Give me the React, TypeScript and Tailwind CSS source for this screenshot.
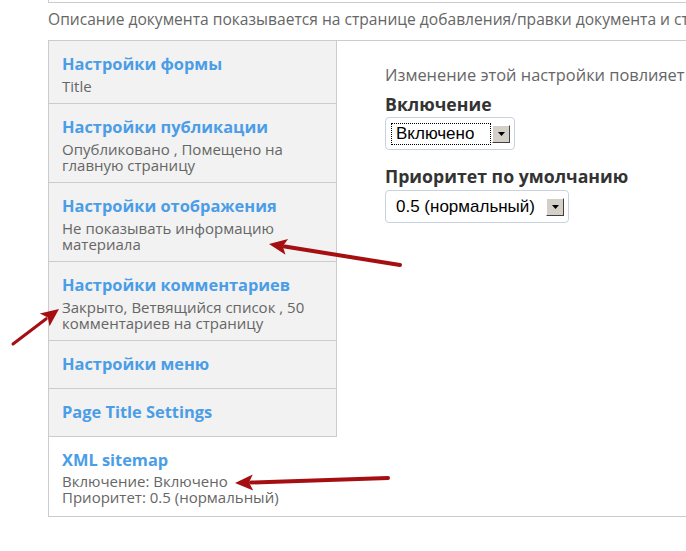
import React from "react";

const tabs = [
  { title: "Настройки формы", summary: ["Title"] },
  { title: "Настройки публикации", summary: ["Опубликовано , Помещено на", "главную страницу"] },
  { title: "Настройки отображения", summary: ["Не показывать информацию", "материала"] },
  { title: "Настройки комментариев", summary: ["Закрыто, Ветвящийся список , 50", "комментариев на страницу"] },
  { title: "Настройки меню", summary: [] },
  { title: "Page Title Settings", summary: [] },
];

function Arrow({ x1, y1, x2, y2, w }: { x1: number; y1: number; x2: number; y2: number; w: number }) {
  const dx = x2 - x1;
  const dy = y2 - y1;
  const len = Math.sqrt(dx * dx + dy * dy);
  const ux = dx / len;
  const uy = dy / len;
  const hl = 18;
  const hw = 8;
  const bx = x2 - ux * hl;
  const by = y2 - uy * hl;
  const px = -uy;
  const py = ux;
  return (
    <g>
      <line x1={x1} y1={y1} x2={bx + ux * 2} y2={by + uy * 2} stroke="#a50f12" strokeWidth={w} strokeLinecap="round" />
      <polygon
        points={`${x2},${y2} ${bx + px * hw},${by + py * hw} ${bx + ux * 4},${by + uy * 4} ${bx - px * hw},${by - py * hw}`}
        fill="#a50f12"
      />
    </g>
  );
}

function Select({ value, textWidth, focused }: { value: string; textWidth: string; focused?: boolean }) {
  return (
    <div className="inline-flex items-center h-[33px] rounded-[4px] border border-[#c9d3de] pl-[5px] pr-[4px] bg-white">
      <div
        className={`h-[22px] flex items-center pl-[4px] text-[17px] text-black ${textWidth} ${focused ? "border border-dotted border-black" : "border border-transparent"}`}
        style={{ fontFamily: '"Liberation Sans", Arial, sans-serif' }}
      >
        {value}
      </div>
      <div className="ml-[1px] w-[18px] h-[18px] bg-[#d4d0c8] border border-t-white border-l-white border-r-[#404040] border-b-[#404040] flex items-center justify-center">
        <svg width="7" height="4" viewBox="0 0 7 4"><polygon points="0,0 7,0 3.5,4" fill="#000" /></svg>
      </div>
    </div>
  );
}

export default function App() {
  return (
    <div className="relative w-[686px] h-[551px] overflow-hidden bg-white" style={{ fontFamily: '"Open Sans", sans-serif' }}>
      <div className="ml-[48px] h-[3px] border-l border-b border-[#cccccc]" />
      <div className="ml-[48px] mt-[5px] text-[15.6px] leading-[22px] text-[#666] whitespace-nowrap">
        Описание документа показывается на странице добавления/правки документа и стиль показа
      </div>
      <div className="ml-[48px] mt-[10px] w-[700px] flex border-t border-b border-l border-[#cccccc]">
        <div className="w-[288px] shrink-0 flex flex-col">
          {tabs.map((t) => (
            <div
              key={t.title}
              className={`bg-[#f2f2f2] border-r border-b border-[#cccccc] pl-[13px] pr-[8px] pt-[12px] ${t.summary.length > 0 ? "pb-[9px]" : "pb-[13px]"}`}
            >
              <div className="text-[16.4px] leading-[22px] font-bold text-[#4a9de6] whitespace-nowrap">{t.title}</div>
              {t.summary.length > 0 && (
                <div className="mt-[3px] text-[15px] leading-[16px] text-[#666]">
                  {t.summary.map((s) => (
                    <div key={s} className="whitespace-nowrap">{s}</div>
                  ))}
                </div>
              )}
            </div>
          ))}
          <div className="bg-white pl-[13px] pr-[8px] pt-[12px] pb-[11px]">
            <div className="text-[16.4px] leading-[22px] font-bold text-[#4a9de6]">XML sitemap</div>
            <div className="mt-[2px] text-[15px] leading-[16px] text-[#666]">
              <div>Включение: Включено</div>
              <div>Приоритет: 0.5 (нормальный)</div>
            </div>
          </div>
          <div className="flex-1 border-r border-[#cccccc]" />
        </div>
        <div className="flex-1 pl-[48px] pt-[23px]">
          <div className="text-[16.4px] leading-[22px] text-[#666] whitespace-nowrap">Изменение этой настройки повлияет на все документы</div>
          <div className="mt-[6px] text-[17.7px] leading-[24px] font-bold text-[#333]">Включение</div>
          <div className="mt-[1px]">
            <Select value="Включено" textWidth="w-[100px]" focused />
          </div>
          <div className="mt-[14px] text-[17.7px] leading-[24px] font-bold text-[#333]">Приоритет по умолчанию</div>
          <div className="mt-[2px]">
            <Select value="0.5 (нормальный)" textWidth="w-[154px]" />
          </div>
        </div>
      </div>
      <svg className="absolute inset-0 pointer-events-none" width="686" height="551">
        <Arrow x1={400} y1={265} x2={269} y2={244} w={4} />
        <Arrow x1={13} y1={344} x2={59} y2={309} w={3} />
        <Arrow x1={388} y1={478} x2={235} y2={483} w={4} />
      </svg>
    </div>
  );
}
